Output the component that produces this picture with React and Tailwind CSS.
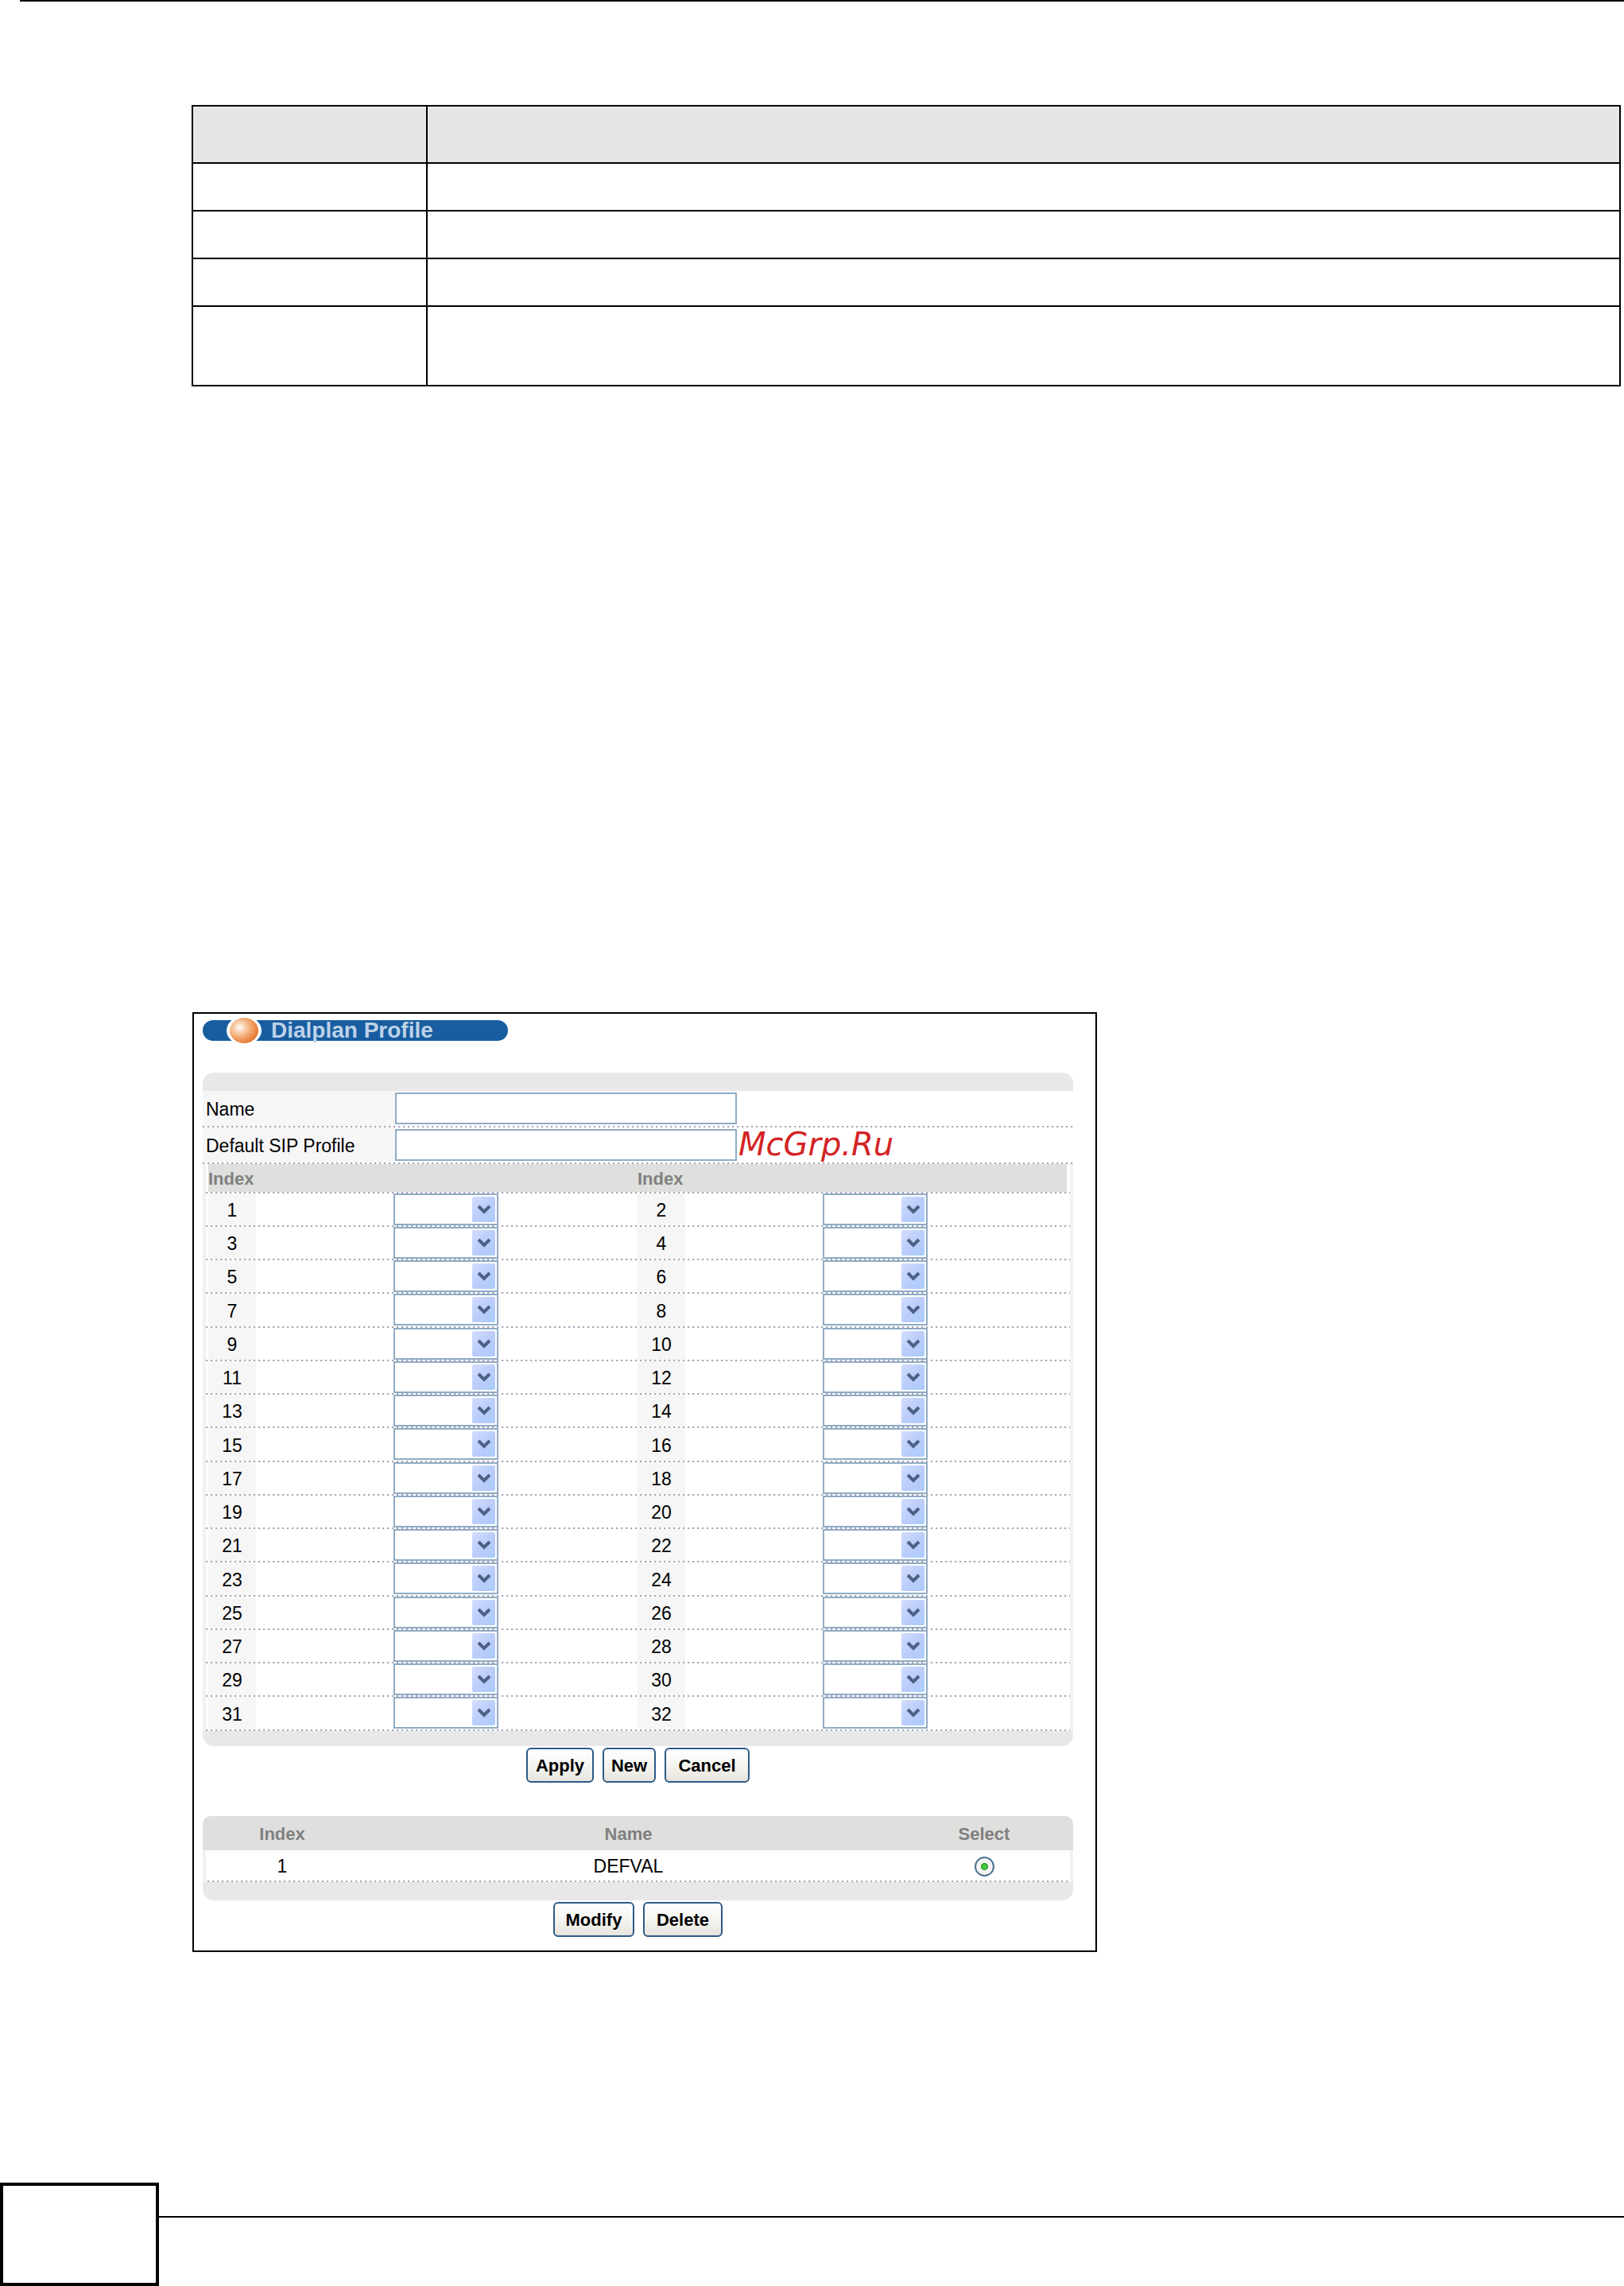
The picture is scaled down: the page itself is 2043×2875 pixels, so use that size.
import { useState } from "react";
import clsx from "clsx";

const rows = Array.from({ length: 16 }, (_, i) => [i * 2 + 1, i * 2 + 2]);

const dots =
  "bg-[repeating-linear-gradient(90deg,#a6a4b8_0_2px,#e9e9ef_2px_3px,transparent_3px_6px)] bg-[length:100%_2px] bg-bottom bg-no-repeat";

function GlossyBall() {
  return (
    <svg viewBox="0 0 44 40" className="h-10 w-11" aria-hidden="true">
      <defs>
        <radialGradient id="ball" cx="0.35" cy="0.38" r="0.7">
          <stop offset="0" stopColor="#ffffff" />
          <stop offset="0.2" stopColor="#fbdcc4" />
          <stop offset="0.6" stopColor="#f0a268" />
          <stop offset="1" stopColor="#e3702a" />
        </radialGradient>
      </defs>
      <ellipse cx="22" cy="20" rx="22" ry="18" fill="#fff" />
      <ellipse cx="22" cy="20" rx="18" ry="16" fill="url(#ball)" />
    </svg>
  );
}

function IndexSelect({ index }) {
  return (
    <div className="relative h-10 w-[132px] shrink-0">
      <select
        aria-label={`Index ${index}`}
        className="block h-full w-full appearance-none border-2 border-[#8fabc4] bg-white"
      />
      <span className="pointer-events-none absolute inset-y-1 right-1 flex w-[29px] items-center justify-center rounded-xs bg-linear-to-br from-[#d3deff] via-[#bccdfb] to-[#a9cbfb]">
        <svg viewBox="0 0 18 14" className="h-3.5 w-[18px]" aria-hidden="true">
          <path d="M2 3l7 7 7-7" fill="none" stroke="#4d6185" strokeWidth="4" />
        </svg>
      </span>
    </div>
  );
}

function IndexCell({ index }) {
  return (
    <div className="flex w-1/2 items-start">
      <span className="flex h-full w-[60px] items-center justify-center bg-[#f6f6f6] pt-0.5">
        {index}
      </span>
      <div className="ml-[173px]">
        <IndexSelect index={index} />
      </div>
    </div>
  );
}

function Field({ id, label, value, onChange, children }) {
  return (
    <div className={clsx("flex h-[46px] items-center pb-0.5", dots)}>
      <label
        htmlFor={id}
        className="flex h-full w-[242px] shrink-0 items-center bg-[#f6f6f6] pt-0.5 pl-1"
      >
        {label}
      </label>
      <input
        id={id}
        type="text"
        className="h-10 w-[430px] border-2 border-[#8fabc4] bg-white px-2 outline-none"
        value={value}
        onChange={(e) => onChange(e.target.value)}
      />
      {children}
    </div>
  );
}

function Button({ children, className }) {
  return (
    <button
      type="button"
      className={clsx(
        "h-11 rounded-md border-2 border-[#2c5b88] bg-linear-to-b from-white via-[#f5f5f1] to-[#e6e4dc] pt-0.5 text-[22px] font-bold",
        className
      )}
    >
      {children}
    </button>
  );
}

export default function App() {
  const [name, setName] = useState("");
  const [sipProfile, setSipProfile] = useState("");
  const [selected, setSelected] = useState("DEFVAL");

  return (
    <div className="bg-white font-['Liberation_Sans',Arial,sans-serif] text-black">
      <div className="ml-[25px] h-0.5 bg-black" />

      <div className="mt-[130px] mr-1 ml-[241px]">
        <table className="w-full table-fixed border-collapse">
          <thead>
            <tr className="h-[72px] bg-[#e5e5e5]">
              <th className="w-[295px] border-2 border-black" />
              <th className="border-2 border-black" />
            </tr>
          </thead>
          <tbody>
            <tr className="h-[60px]">
              <td className="border-2 border-black" />
              <td className="border-2 border-black" />
            </tr>
            <tr className="h-[60px]">
              <td className="border-2 border-black" />
              <td className="border-2 border-black" />
            </tr>
            <tr className="h-[60px]">
              <td className="border-2 border-black" />
              <td className="border-2 border-black" />
            </tr>
            <tr className="h-[100px]">
              <td className="border-2 border-black" />
              <td className="border-2 border-black" />
            </tr>
          </tbody>
        </table>
      </div>

      <main className="mt-[787px] ml-[242px] w-[1138px] border-2 border-black pt-px pr-7 pb-[17px] pl-[11px] text-[23px] leading-7">
        <div className="flex h-10 items-center">
          <div className="flex h-[26px] w-[384px] items-center rounded-full bg-[#185da0] pl-[30px]">
            <GlossyBall />
            <h1 className="ml-3 text-[28px] leading-6 font-bold text-[#bdd2e8]">
              Dialplan Profile
            </h1>
          </div>
        </div>

        <form className="mt-[33px]">
          <div className="h-[23px] rounded-t-[14px] bg-[#e8e8e8]" />
          <Field id="name" label="Name" value={name} onChange={setName} />
          <Field
            id="sip"
            label="Default SIP Profile"
            value={sipProfile}
            onChange={setSipProfile}
          >
            <span className="ml-0.5 pb-0.5 font-['DejaVu_Sans',sans-serif] text-[40px] leading-10 text-[#d22424] italic">
              McGrp.Ru
            </span>
          </Field>

          <div className="border-x-4 border-[#f2f2f2]">
            <div className={clsx("h-[37px] pr-1 pl-[3px] pb-0.5", dots)}>
              <div className="flex h-full items-center bg-[#dfdfdd] pt-0.5 text-[22px] font-bold text-[#808080]">
                <span className="w-1/2">Index</span>
                <span className="w-1/2">Index</span>
              </div>
            </div>
            {rows.map(([left, right], i) => (
              <div
                key={left}
                className={clsx(
                  "flex pr-1 pl-[3px] pb-0.5",
                  dots,
                  i % 4 === 3 ? "h-[43px]" : "h-[42px]"
                )}
              >
                <IndexCell index={left} />
                <IndexCell index={right} />
              </div>
            ))}
          </div>
          <div className="h-[19px] rounded-b-[14px] bg-[#e8e8e8]" />

          <div className="mt-0.5 flex justify-center gap-[11px]">
            <Button className="w-[85px]">Apply</Button>
            <Button className="w-[67px]">New</Button>
            <Button className="w-[107px]">Cancel</Button>
          </div>
        </form>

        <table className="mt-[42px] w-full table-fixed border-separate border-spacing-0">
          <thead className="text-[22px] text-[#808080]">
            <tr className="h-[43px]">
              <th className="w-[200px] rounded-tl-[10px] bg-[#dfdfdd] pt-0.5">Index</th>
              <th className="bg-[#dfdfdd] pt-0.5">Name</th>
              <th className="w-[224px] rounded-tr-[10px] bg-[#dfdfdd] pt-0.5">Select</th>
            </tr>
          </thead>
          <tbody>
            <tr className={clsx("h-10 text-center", dots)}>
              <td className="border-l-4 border-[#f2f2f2] pr-1">1</td>
              <td>DEFVAL</td>
              <td className="border-r-4 border-[#f2f2f2] pl-1">
                <input
                  type="radio"
                  name="profile"
                  aria-label="DEFVAL"
                  className="mx-auto block size-[25px] appearance-none rounded-full border-2 border-[#4a7196] bg-[#f4f4f2] checked:bg-[radial-gradient(circle,#4cc647_0_2px,#22a01f_4px,transparent_5px)]"
                  checked={selected === "DEFVAL"}
                  onChange={() => setSelected("DEFVAL")}
                />
              </td>
            </tr>
          </tbody>
        </table>
        <div className="h-[23px] rounded-b-[14px] bg-[#e8e8e8]" />

        <div className="mt-0.5 flex justify-center gap-[11px]">
          <Button className="w-[102px]">Modify</Button>
          <Button className="w-[100px]">Delete</Button>
        </div>
      </main>

      <footer className="mt-[290px] flex">
        <div className="h-[130px] w-[200px] border-4 border-black" />
        <div className="mt-[42px] h-0.5 flex-1 bg-black" />
      </footer>
    </div>
  );
}
